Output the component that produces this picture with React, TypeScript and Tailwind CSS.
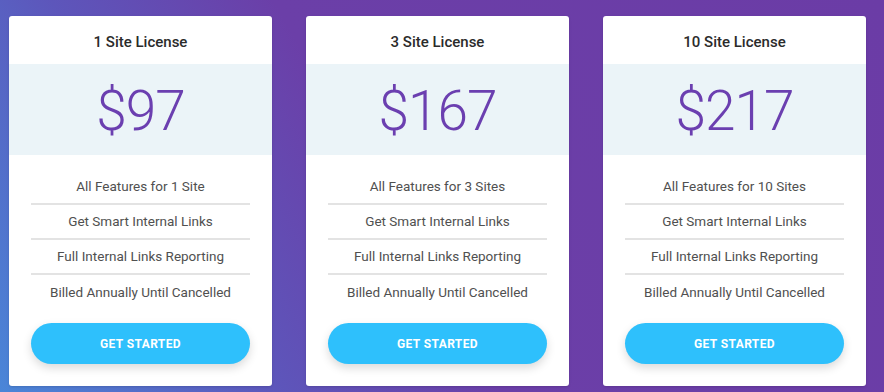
const plans = [
  { name: '1 Site License', price: '$97', first: 'All Features for 1 Site' },
  { name: '3 Site License', price: '$167', first: 'All Features for 3 Sites' },
  { name: '10 Site License', price: '$217', first: 'All Features for 10 Sites' },
];

function PlanCard({ name, price, first }: { name: string; price: string; first: string }) {
  const features = [first, 'Get Smart Internal Links', 'Full Internal Links Reporting', 'Billed Annually Until Cancelled'];
  return (
    <div className="w-[263px] bg-white rounded-[3px] shadow-sm flex flex-col">
      <div className="h-[48px] pt-[4px] flex items-center justify-center text-[15px] font-medium text-[#2b2b2b]">
        {name}
      </div>
      <div className="h-[91px] pt-[4px] bg-[#ebf4f8] flex items-center justify-center">
        <span className="text-[55px] font-light leading-none text-[#6b3fb0] tracking-[-1px]">{price}</span>
      </div>
      <ul className="pt-[15px] px-[22px]">
        {features.map((f, i) => (
          <li
            key={f}
            className={
              'h-[35px] flex items-center justify-center text-[13.5px] text-[#505050] ' +
              (i < features.length - 1 ? 'border-b-2 border-[#e3e3e3]' : '')
            }
          >
            {f}
          </li>
        ))}
      </ul>
      <div className="px-[22px] pt-[13px] pb-[22px]">
        <button className="w-full h-[41px] rounded-full bg-[#2ec0fc] text-white text-[12px] font-bold tracking-[0.4px] shadow-[0_4px_10px_rgba(0,0,0,0.15)]">
          GET STARTED
        </button>
      </div>
    </div>
  );
}

export default function App() {
  return (
    <div
      className="w-[884px] h-[392px] overflow-hidden bg-[linear-gradient(60deg,#4a86d8_0%,#5d56bb_25%,#6b3fa8_45%,#6b3ca6_100%)] pt-[16px] pl-[9px] flex gap-[34px] items-start"
      style={{ fontFamily: 'Roboto, "Liberation Sans", sans-serif' }}
    >
      {plans.map((p) => (
        <PlanCard key={p.name} {...p} />
      ))}
    </div>
  );
}
